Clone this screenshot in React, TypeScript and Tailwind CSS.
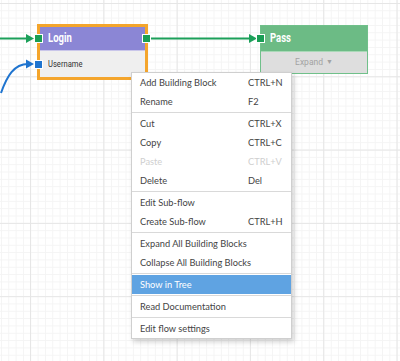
const menuFont = { fontFamily: 'Lato, "Open Sans", sans-serif' };

type Item = { label: string; shortcut?: string; disabled?: boolean; active?: boolean };

const groups: Item[][] = [
  [
    { label: "Add Building Block", shortcut: "CTRL+N" },
    { label: "Rename", shortcut: "F2" },
  ],
  [
    { label: "Cut", shortcut: "CTRL+X" },
    { label: "Copy", shortcut: "CTRL+C" },
    { label: "Paste", shortcut: "CTRL+V", disabled: true },
    { label: "Delete", shortcut: "Del" },
  ],
  [
    { label: "Edit Sub-flow" },
    { label: "Create Sub-flow", shortcut: "CTRL+H" },
  ],
  [{ label: "Expand All Building Blocks" }, { label: "Collapse All Building Blocks" }],
  [{ label: "Show in Tree", active: true }],
  [{ label: "Read Documentation" }],
  [{ label: "Edit flow settings" }],
];

const MenuRow = ({ item }: { item: Item }) => {
  let cls = "text-[#444]";
  if (item.disabled) cls = "text-[#cfcfcf]";
  if (item.active) cls = "bg-[#5fa3e2] text-white";
  return (
    <div className={`flex items-center h-[19px] pl-[8px] pr-[6px] text-[9.25px] ${cls}`}>
      <span className="flex-1">{item.label}</span>
      {item.shortcut && <span className="w-[37px]">{item.shortcut}</span>}
    </div>
  );
};

const ContextMenu = () => (
  <div
    className="absolute left-[131px] top-[72px] w-[161px] bg-white border border-[#cfcfcf] shadow-[2px_3px_5px_rgba(0,0,0,0.18)]"
    style={menuFont}
  >
    {groups.map((g, i) => (
      <div key={i} className={i > 0 ? "border-t border-[#d9d9d9] mt-px pt-px" : ""}>
        {g.map((item) => (
          <MenuRow key={item.label} item={item} />
        ))}
      </div>
    ))}
  </div>
);

const Port = ({ className }: { className: string }) => (
  <div className={`absolute w-[9px] h-[9px] border border-white ${className}`} />
);

const Edges = () => (
  <svg className="absolute inset-0" width="400" height="361">
    <line x1="0" y1="38.5" x2="28" y2="38.5" stroke="#1ca05a" strokeWidth="2" />
    <polygon points="26,34 34,38.5 26,43" fill="#1ca05a" />
    <path d="M 1 93 C 7 76, 14 64, 28 64" fill="none" stroke="#1f74cf" strokeWidth="2" />
    <polygon points="26,59.5 34,64 26,68.5" fill="#1f74cf" />
    <line x1="150" y1="38.5" x2="251" y2="38.5" stroke="#1ca05a" strokeWidth="2" />
    <polygon points="249,34 257,38.5 249,43" fill="#1ca05a" />
  </svg>
);

export default function App() {
  return (
    <div
      className="relative w-[400px] h-[361px] overflow-hidden bg-white bg-[linear-gradient(to_right,#e6e6e6_1px,transparent_1px),linear-gradient(to_bottom,#e6e6e6_1px,transparent_1px),linear-gradient(to_right,#f4f4f4_1px,transparent_1px),linear-gradient(to_bottom,#f4f4f4_1px,transparent_1px)] bg-size-[73.3px_73.3px,73.3px_73.3px,7.33px_7.33px,7.33px_7.33px] bg-position-[30px_3px,30px_3px,1px_3px,1px_3px]"
      style={{ fontFamily: '"Roboto", "Liberation Sans", sans-serif' }}
    >
      <Edges />

      {/* Login node */}
      <div className="absolute left-[37px] top-[24px] w-[111px] h-[56px] border-[3px] border-[#f4a52c] bg-[#efefef] flex flex-col">
        <div className="h-[24px] bg-[#8b86d5] border-b border-[#c9c6ea] flex items-center pl-[8px] text-white font-bold text-[12.5px]">
          <span className="inline-block origin-left scale-x-[0.76]">Login</span>
        </div>
        <div className="flex-1 flex items-center pl-[8px] text-[9.5px] text-[#333]">
          <span className="inline-block origin-left scale-x-[0.8]">Username</span>
        </div>
      </div>
      <Port className="left-[34px] top-[34px] bg-[#1a9e55]" />
      <Port className="left-[34px] top-[60px] bg-[#1f74cf]" />
      <Port className="left-[142px] top-[34px] bg-[#1a9e55]" />

      {/* Pass node */}
      <div className="absolute left-[260px] top-[25px] w-[108px] h-[49px] border border-[#70c08a] bg-[#dedede] flex flex-col">
        <div className="h-[26px] bg-[#6cbb85] border-b border-[#a9d9b7] flex items-center pl-[9px] text-white font-bold text-[12.5px]">
          <span className="inline-block origin-left scale-x-[0.76]">Pass</span>
        </div>
        <div className="flex-1 flex items-center justify-center gap-[3px] text-[8.5px] text-[#a3a3a3]">
          Expand
          <span className="text-[7px]">▼</span>
        </div>
      </div>
      <Port className="left-[256px] top-[34px] bg-[#1a9e55]" />

      <ContextMenu />
    </div>
  );
}
